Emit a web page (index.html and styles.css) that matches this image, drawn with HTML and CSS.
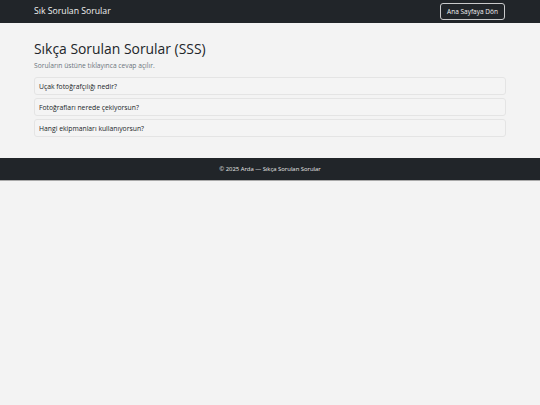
FILE: index.html
```html
<!DOCTYPE html>
<html lang="tr">
<head>
<meta charset="utf-8">
<title>Sık Sorulan Sorular</title>
<link rel="stylesheet" href="styles.css">
</head>
<body>
<nav class="navbar">
  <div class="container nav-inner">
    <span class="brand">Sık Sorulan Sorular</span>
    <a class="btn-home" href="#">Ana Sayfaya Dön</a>
  </div>
</nav>
<main class="container main">
  <h1 class="title">Sıkça Sorulan Sorular (SSS)</h1>
  <p class="lead">Soruların üstüne tıklayınca cevap açılır.</p>
  <div class="faq">
    <div class="faq-item">Uçak fotoğrafçılığı nedir?</div>
    <div class="faq-item">Fotoğrafları nerede çekiyorsun?</div>
    <div class="faq-item">Hangi ekipmanları kullanıyorsun?</div>
  </div>
</main>
<footer class="footer">© 2025 Arda — Sıkça Sorulan Sorular</footer>
</body>
</html>
```
FILE: styles.css
```css
* { box-sizing: border-box; }
html, body { margin: 0; padding: 0; }
body {
  background: #f3f3f3;
  font-family: "Open Sans", "Noto Sans", sans-serif;
  color: #212529;
}
.container {
  width: 480px;
  margin: 0 auto;
  padding: 0 4px;
}
.navbar {
  background: #212529;
  height: 23px;
}
.nav-inner {
  height: 23px;
  display: flex;
  align-items: center;
  justify-content: space-between;
}
.brand {
  color: #f1f1f1;
  font-size: 8.7px;
  line-height: 1;
}
.btn-home {
  color: #f1f1f1;
  text-decoration: none;
  font-size: 6.5px;
  border: 1px solid #c9cacb;
  border-radius: 3px;
  height: 17px;
  width: 65px;
  display: flex;
  align-items: center;
  justify-content: center;
  margin-right: 1px;
}
.main {
  padding-top: 16px;
  padding-bottom: 21px;
}
.title {
  margin: 0;
  font-weight: 400;
  font-size: 13.9px;
  line-height: 19px;
  color: #212529;
}
.lead {
  margin: 3px 0 7px;
  font-size: 6.7px;
  line-height: 9px;
  color: #6c757d;
}
.faq {
  display: flex;
  flex-direction: column;
  gap: 3px;
}
.faq-item {
  height: 18px;
  border: 1px solid #e4e4e4;
  border-radius: 3px;
  background: #f4f4f4;
  font-size: 6.8px;
  display: flex;
  align-items: center;
  padding-left: 4px;
  color: #212529;
}
.footer {
  background: #212529;
  color: #e8e8e8;
  height: 23px;
  display: flex;
  align-items: center;
  justify-content: center;
  font-size: 5.9px;
  border-bottom: 1px solid #a9a9a9;
}
```
